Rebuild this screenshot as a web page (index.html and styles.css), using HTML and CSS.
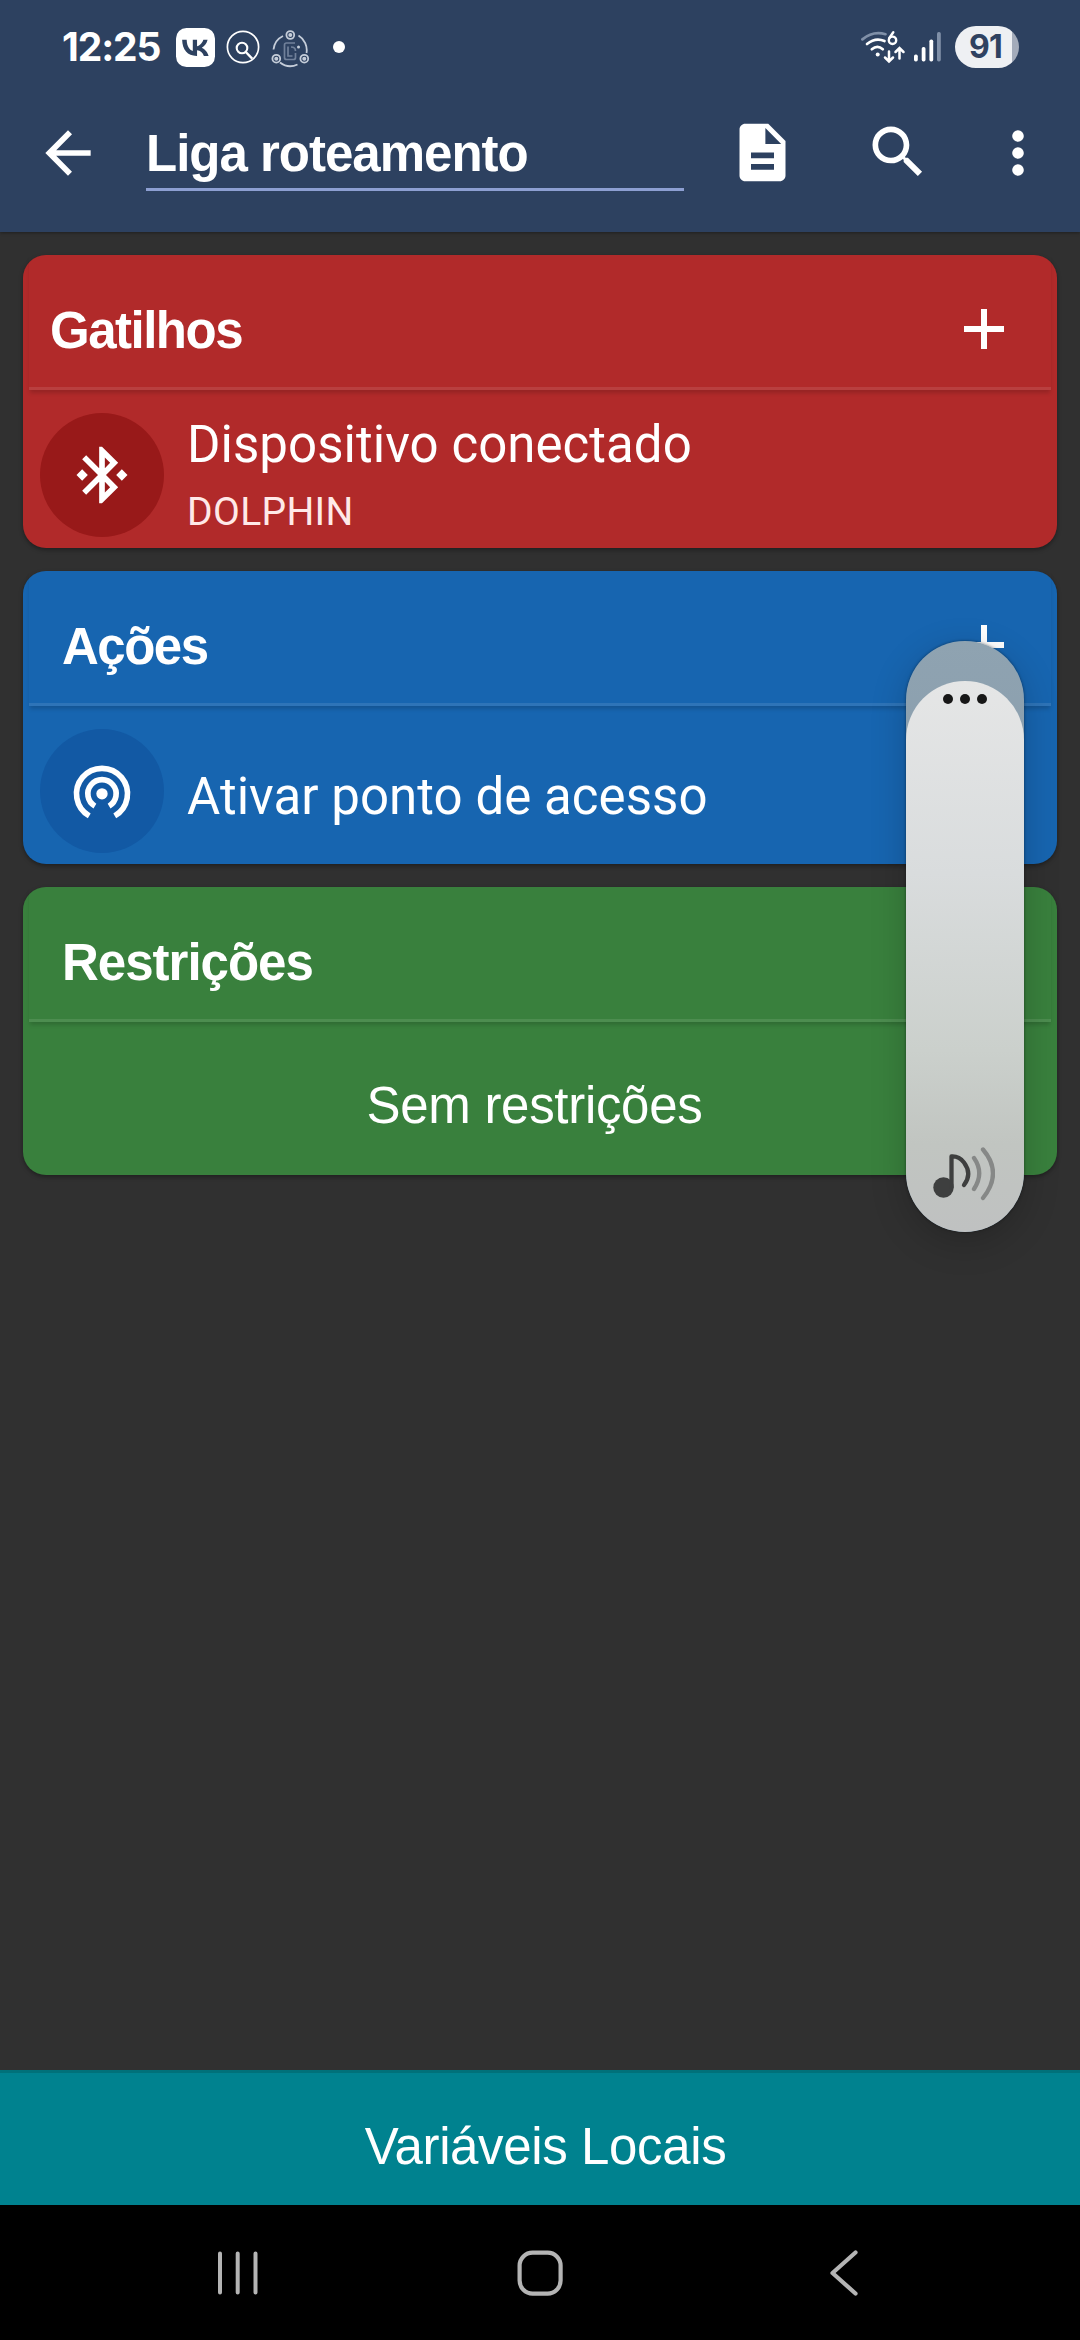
FILE: index.html
```html
<!DOCTYPE html>
<html lang="pt-BR">
<head>
<meta charset="utf-8">
<title>Liga roteamento</title>
<link rel="stylesheet" href="styles.css">
</head>
<body>
<div class="screen">
  <header class="top">
    <div class="status">
      <span class="clock">12:25</span>
      <svg class="ic-vk" width="39" height="39" viewBox="0 0 39 39"><rect width="39" height="39" rx="10.5" fill="#fff"/><path transform="translate(3.7 4.2) scale(1.28 1.25)" fill="#2d4160" d="M13.16 18.99C6.1 18.99 2.08 14.15 1.91 6.1h3.54c.12 5.91 2.72 8.41 4.78 8.93V6.1h3.33v5.1c2.04-.22 4.18-2.54 4.9-5.1h3.33c-.56 3.15-2.88 5.47-4.53 6.43 1.65.77 4.3 2.8 5.31 6.46h-3.67c-.79-2.45-2.75-4.35-5.34-4.61v4.61z"/></svg>
      <svg class="ic-find" width="34" height="34" viewBox="0 0 34 34" fill="none" stroke="#fff"><circle cx="17" cy="17" r="15.6" stroke-width="1.7"/><circle cx="16" cy="18" r="5.3" stroke-width="2.1"/><path d="M19.8 22l6.4 6.6" stroke-width="2.4"/></svg>
      <svg class="ic-net" width="40" height="40" viewBox="0 0 40 40" fill="none" stroke="#c5cdd9" stroke-width="1.8"><path d="M2.5 20.500A17 17 0 0 1 12 7M27.500 6.500A17 17 0 0 1 35.500 24M9 33.500A17 17 0 0 0 26.500 35.500"/><circle cx="19.300" cy="6" r="3.900"/><circle cx="5.300" cy="29.700" r="3.900"/><circle cx="33.300" cy="29.700" r="3.900"/><g fill="#c5cdd9" stroke="none"><circle cx="19.300" cy="6" r="2"/><circle cx="5.300" cy="29.700" r="2"/><circle cx="33.300" cy="29.700" r="2"/></g><path stroke="#71819a" stroke-width="1.700" d="M24 14h-8.500q-2 0-2 2v12.500q0 2 2 2h7q2 0 2-2V24M17 17.500v9.500h4.500M20 18q4.500 0 4.500 4"/><circle cx="27.500" cy="18" r="1.500" fill="#c5cdd9" stroke="none"/></svg>
      <i class="more-dot"></i>
      <div class="signals">
        <svg class="ic-wifi" width="46" height="34" viewBox="0 0 46 34" fill="none" stroke="#fff" stroke-width="2.700" stroke-linecap="round"><path stroke="#8090a8" d="M2.400 9.400Q13 .500 25.500 4.200"/><path d="M7 14Q15.500 7 24.500 11M11.800 19.200Q17.500 14.500 22.800 19.200"/><circle cx="17.700" cy="24.400" r="2" fill="#fff" stroke="none"/><path stroke-width="2.400" d="M33.300 2.200L29.300 8"/><circle cx="32.500" cy="10.300" r="3.700" stroke-width="2.400"/><path stroke-width="2.500" d="M29 21.500v9.500M25 27.500l4 4 4-4M39.500 28.500V19M35.500 22l4-4 4 4"/></svg>
        <svg class="ic-sig" width="27" height="30" viewBox="0 0 27 30" fill="#fff"><rect x="0" y="22.500" width="3.800" height="7" rx="1.700"/><rect x="7.700" y="15" width="3.800" height="14.500" rx="1.700"/><rect x="15.400" y="7.500" width="3.800" height="22" rx="1.700"/><rect x="23" y="0" width="3.800" height="29.500" rx="1.700" fill="#8090a8"/></svg>
        <span class="battery">91</span>
      </div>
    </div>
    <div class="toolbar">
      <svg class="back" width="68" height="68" viewBox="0 0 24 24" fill="#fff"><path d="M20 11H7.830l5.590-5.590L12 4l-8 8 8 8 1.410-1.410L7.830 13H20v-2z"/></svg>
      <div class="name-field">Liga roteamento</div>
      <svg class="doc" width="69" height="69" viewBox="0 0 24 24" fill="#fff"><path d="M14 2H6c-1.100 0-1.990.900-1.990 2L4 20c0 1.100.890 2 1.990 2H18c1.100 0 2-.900 2-2V8l-6-6zm2 16H8v-2h8v2zm0-4H8v-2h8v2zm-3-5V3.500L18.500 9H13z"/></svg>
      <svg class="search" width="68" height="68" viewBox="0 0 24 24" fill="#fff"><path d="M15.500 14h-.790l-.280-.270C15.410 12.590 16 11.110 16 9.500 16 5.910 13.090 3 9.500 3S3 5.910 3 9.500 5.910 16 9.500 16c1.610 0 3.090-.590 4.230-1.570l.270.280v.790l5 4.990L20.490 19l-4.990-5zm-6 0C7.010 14 5 11.990 5 9.500S7.010 5 9.500 5 14 7.010 14 9.500 11.990 14 9.500 14z"/></svg>
      <svg class="menu" width="68" height="68" viewBox="0 0 24 24" fill="#fff"><circle cx="12" cy="6" r="2.050"/><circle cx="12" cy="12" r="2.050"/><circle cx="12" cy="18" r="2.050"/></svg>
    </div>
  </header>

  <main class="cards">
    <section class="card triggers">
      <div class="card-head">
        <h2>Gatilhos</h2>
        <svg class="plus" width="40" height="40" viewBox="0 0 40 40" fill="#fff"><path d="M17 0h6v17h17v6H23v17h-6V23H0v-6h17z"/></svg>
      </div>
      <div class="item">
        <span class="badge"><svg width="68" height="68" viewBox="0 0 24 24" fill="#fff"><path d="M7 12l-2-2-2 2 2 2 2-2zm10.710-4.290L12 2h-1v7.590L6.410 5 5 6.410 10.590 12 5 17.590 6.410 19 11 14.410V22h1l5.710-5.710-4.300-4.290 4.300-4.290zM13 5.830l1.880 1.880L13 9.590V5.830zm1.880 10.460L13 18.170v-3.760l1.880 1.880zM19 10l-2 2 2 2 2-2-2-2z"/></svg></span>
        <div class="item-text">
          <div class="item-title">Dispositivo conectado</div>
          <div class="item-sub">DOLPHIN</div>
        </div>
      </div>
    </section>

    <section class="card actions">
      <div class="card-head">
        <h2>Ações</h2>
        <svg class="plus" width="40" height="40" viewBox="0 0 40 40" fill="#fff"><path d="M17 0h6v17h17v6H23v17h-6V23H0v-6h17z"/></svg>
      </div>
      <div class="item single">
        <span class="badge"><svg width="68" height="68" viewBox="0 0 24 24" fill="none" stroke="#fff" stroke-width="2"><circle cx="12" cy="13" r="2" fill="#fff" stroke="none"/><path d="M9.500 17.330a5 5 0 1 1 5 0M7.500 20.790a9 9 0 1 1 9 0"/></svg></span>
        <div class="item-title">Ativar ponto de acesso</div>
      </div>
    </section>

    <section class="card constraints">
      <div class="card-head">
        <h2>Restrições</h2>
      </div>
      <div class="empty">Sem restrições</div>
    </section>
  </main>

  <div class="locals">Variáveis Locais</div>

  <nav class="navbar">
    <svg class="recents" width="42" height="46" viewBox="0 0 42 46" fill="none" stroke="#b4b4b4" stroke-width="4" stroke-linecap="round"><path d="M3 3.500v39M20.700 3.500v39M38.500 3.500v39"/></svg>
    <svg class="home" width="46" height="46" viewBox="0 0 46 46" fill="none" stroke="#b4b4b4" stroke-width="4.200"><rect x="2.600" y="2.600" width="41" height="41" rx="13"/></svg>
    <svg class="prev" width="30" height="46" viewBox="0 0 30 46" fill="none" stroke="#b4b4b4" stroke-width="4.200" stroke-linecap="round" stroke-linejoin="round"><path d="M26.500 2.500L3.500 23l23 20.500"/></svg>
  </nav>

  <div class="volume">
    <div class="level">
      <svg width="44" height="12" viewBox="0 0 44 12" fill="#171717"><circle cx="5" cy="6" r="5"/><circle cx="22" cy="6" r="5"/><circle cx="39" cy="6" r="5"/></svg>
      <svg class="note" width="62" height="54" viewBox="0 0 62 54" fill="none" stroke-width="4.300" stroke-linecap="round"><circle cx="10.500" cy="40.500" r="10.200" fill="#3e3f3f"/><path stroke="#3e3f3f" stroke-linejoin="round" d="M18.500 40V9.500Q26 9 31 15.500Q39.500 27 31 38"/><path stroke="#868887" d="M41 11Q51.500 26 41 42M50 2.500Q70 26 50 51"/></svg>
    </div>
  </div>
</div>
</body>
</html>
```
FILE: styles.css
```css
* { box-sizing: border-box; }

body {
  margin: 0;
  background: #303030;
  color: #fff;
  font-family: "Liberation Sans", Arial, sans-serif;
}

svg { display: block; flex: none; }

.screen {
  position: relative;
  display: flex;
  flex-direction: column;
  width: 1080px;
  height: 2340px;
  overflow: hidden;
}

/* Header */
.top {
  height: 232px;
  background: #2d4160;
  box-shadow: 0 1px 3px rgba(0, 0, 0, .35);
}

.status {
  display: flex;
  align-items: center;
  height: 94px;
  padding: 0 61px 0 62px;
}

.clock {
  width: 114px;
  font: 700 39px/48px Inter, sans-serif;
  letter-spacing: -1.1px;
}

.ic-find { margin-left: 10.500px; }
.ic-net { margin: 3px 0 0 11px; }

.more-dot {
  width: 12px;
  height: 12px;
  margin-left: 22px;
  border-radius: 50%;
  background: #fff;
}

.signals {
  display: flex;
  align-items: center;
  margin-left: auto;
}

.ic-sig { margin: 0 14px 0 8px; }

.battery {
  width: 64px;
  height: 42px;
  border-radius: 21px;
  background: linear-gradient(90deg, #eef0f3 57px, #a3abba 57px);
  color: #2f4261;
  font: 700 32px/41px Inter, sans-serif;
  letter-spacing: -.7px;
  padding-left: 14px;
}

.toolbar {
  display: flex;
  align-items: flex-start;
  padding: 25px 28px 0 34px;
}

.name-field {
  width: 538px;
  height: 72px;
  margin-left: 44px;
  padding-top: 5px;
  border-bottom: 3.500px solid #8d9fd2;
  font-size: 51px;
  font-weight: 700;
  line-height: 60px;
  letter-spacing: -1px;
  white-space: nowrap;
}

.doc { margin: -1px 0 0 44px; }
.search { margin: -1px 0 0 67px; }
.menu { margin-left: auto; }

/* Macro sections */
.cards {
  display: flex;
  flex: 1;
  flex-direction: column;
  gap: 23px;
  padding: 23px;
}

.card {
  height: 293px;
  border-radius: 23px;
  box-shadow: 0 2px 4px rgba(0, 0, 0, .35);
}

.triggers { background: #b12a2a; }
.actions { background: #1765b0; }
.constraints { height: 288px; background: #39803d; }

.card-head {
  display: flex;
  align-items: flex-start;
  justify-content: space-between;
  height: 135px;
  margin: 0 6px;
  padding: 46px 47px 0 33px;
  border-bottom: 3px solid rgba(255, 255, 255, .1);
  box-shadow: 0 4px 4px -1px rgba(0, 0, 0, .16);
}

.triggers .card-head { padding-left: 21px; }

h2 {
  margin: 0;
  font-size: 51px;
  line-height: 60px;
  letter-spacing: -1.5px;
}

.constraints h2 { letter-spacing: -1px; }

.plus { margin-top: 8px; }

.item {
  display: flex;
  padding: 23px 17px 0;
  font-family: Roboto, sans-serif;
}

.badge {
  display: flex;
  align-items: center;
  justify-content: center;
  width: 124px;
  height: 124px;
  margin-right: 23px;
  border-radius: 50%;
}

.triggers .badge { background: #981919; }
.actions .badge { background: #1259a4; }

.item-text { padding-top: 2px; }

.item-title {
  font-size: 51px;
  line-height: 60px;
  letter-spacing: .05px;
}

.single .item-title { margin-top: 38px; }

.item-sub {
  margin-top: 14px;
  color: #ffe9e8;
  font-size: 39px;
  line-height: 46px;
  letter-spacing: .35px;
}

.empty {
  padding: 54px 11px 0 0;
  font-size: 51px;
  line-height: 60px;
  letter-spacing: -.3px;
  text-align: center;
}

/* Bottom bars */
.locals {
  height: 135px;
  padding: 44px 0 0 11px;
  border-top: 3px solid #00717a;
  background: #00828f;
  font-size: 51px;
  line-height: 60px;
  letter-spacing: -.37px;
  text-align: center;
}

.navbar {
  display: flex;
  align-items: center;
  height: 135px;
  padding: 1px 221px 0 217px;
  background: #000;
}

.home { margin-left: 258px; }
.prev { margin-left: auto; }

/* Volume overlay */
.volume {
  position: absolute;
  left: 906px;
  top: 641px;
  width: 118px;
  height: 591px;
  padding-top: 40px;
  overflow: hidden;
  border-radius: 59px;
  background: linear-gradient(#8fa3b1, #8b9fae 120px);
  box-shadow: 0 0 3px rgba(0, 0, 0, .45), 0 10px 36px rgba(0, 0, 0, .2);
}

.level {
  display: flex;
  flex-direction: column;
  align-items: center;
  justify-content: space-between;
  height: 551px;
  padding: 12px 0 31px;
  border-radius: 59px;
  background: linear-gradient(#e5e6e6, #d9dcdd 35%, #cbd0cc 67%, #c1c5c1 84%, #bfc1c1);
}

.note { margin-right: 3px; }
```
